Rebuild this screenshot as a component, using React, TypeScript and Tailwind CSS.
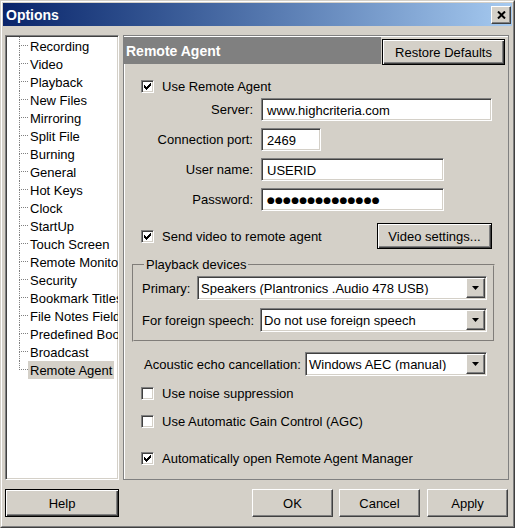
import React from 'react'

const raised =
  'bg-[#d4d0c8] border border-t-white border-l-white border-r-[#404040] border-b-[#404040] shadow-[inset_-1px_-1px_0_#808080]'
const raisedDefault =
  'bg-[#d4d0c8] border border-black shadow-[inset_1px_1px_0_#ffffff,inset_-1px_-1px_0_#404040,inset_-2px_-2px_0_#808080]'
const sunken =
  'border border-t-[#808080] border-l-[#808080] border-r-white border-b-white shadow-[inset_1px_1px_0_#404040,inset_-1px_-1px_0_#d4d0c8]'

const treeItems = [
  'Recording',
  'Video',
  'Playback',
  'New Files',
  'Mirroring',
  'Split File',
  'Burning',
  'General',
  'Hot Keys',
  'Clock',
  'StartUp',
  'Touch Screen',
  'Remote Monitoring',
  'Security',
  'Bookmark Titles',
  'File Notes Fields',
  'Predefined Bookmarks',
  'Broadcast',
  'Remote Agent',
]

function Checkbox({ checked, label }: { checked: boolean; label: string }) {
  return (
    <div className="flex h-[16px] items-center">
      <div className={`ml-[9px] flex h-[13px] w-[13px] items-center justify-center bg-white ${sunken}`}>
        {checked && (
          <svg width="7" height="7" viewBox="0 0 7 7">
            <path d="M0 2h1v1h1v1h1V3h1V2h1V1h1V0h1v3H6v1H5v1H4v1H3v1H2V6H1V5H0z" fill="#000" />
          </svg>
        )}
      </div>
      <span className="ml-[8px] whitespace-nowrap">{label}</span>
    </div>
  )
}

function Field({ label, value, width }: { label: string; value: React.ReactNode; width: string }) {
  return (
    <div className="flex h-[23px] items-center">
      <span className="w-[121px] text-right">{label}</span>
      <div className={`ml-[8px] flex h-[23px] items-center bg-white pl-[5px] pt-[1px] ${width} ${sunken}`}>{value}</div>
    </div>
  )
}

function Dropdown({ value, width }: { value: string; width: string }) {
  return (
    <div className={`flex h-[24px] items-center bg-white ${width} ${sunken}`}>
      <span className="flex-1 truncate pl-[3px] pt-[1px]">{value}</span>
      <div className={`mr-[1px] flex h-[20px] w-[19px] items-center justify-center ${raised}`}>
        <svg width="7" height="4" viewBox="0 0 7 4">
          <path d="M0 0h7L3.5 4z" fill="#000" />
        </svg>
      </div>
    </div>
  )
}

export default function App() {
  return (
    <div className="h-[528px] w-[515px] border border-t-[#d4d0c8] border-l-[#d4d0c8] border-r-[#404040] border-b-[#404040] bg-[#d4d0c8] font-['Liberation_Sans',Arial,sans-serif] text-[13px] leading-none text-black">
      <div className="flex h-full flex-col border border-t-white border-l-white border-r-[#808080] border-b-[#808080] p-[1px]">
        <div className="flex h-[23px] items-center justify-between bg-linear-to-r from-[#0a246a] to-[#a6caf0] pl-[3px]">
          <span className="text-[14px] font-bold text-white">Options</span>
          <div className={`mr-[1px] flex h-[18px] w-[20px] items-center justify-center ${raised}`}>
            <svg width="9" height="8" viewBox="0 0 9 8">
              <path d="M1 0.5l7 7M8 0.5l-7 7" stroke="#000" strokeWidth="2" />
            </svg>
          </div>
        </div>

        <div className="flex flex-col pl-[2px] pt-[9px]">
          <div className="flex gap-[4px]">
            <div className={`h-[445px] w-[114px] overflow-hidden bg-white ${sunken}`}>
              <div className="pt-[1px]">
                {treeItems.map((item, i) => {
                  const last = i === treeItems.length - 1
                  const selected = item === 'Remote Agent'
                  return (
                    <div key={item} className="flex h-[18px] items-stretch">
                      <div className="w-[13px] shrink-0" />
                      <div className="flex w-[9px] shrink-0 flex-col">
                        <div className="h-[9px] border-b border-l border-dotted border-[#808080]" />
                        {!last && <div className="flex-1 border-l border-dotted border-[#808080]" />}
                      </div>
                      <div
                        className={`flex items-center whitespace-nowrap px-[2px] pt-[1px] ${selected ? 'bg-[#d4d0c8]' : ''}`}
                      >
                        {item}
                      </div>
                    </div>
                  )
                })}
              </div>
            </div>

            <div className="h-[445px] w-[386px] border border-[#808080] shadow-[inset_1px_1px_0_#ffffff]">
              <div className="flex h-[28px] pt-[1px]">
                <div className="flex flex-1 items-center bg-[#808080] pl-[2px] pt-[1px] text-[14px] font-bold text-white">
                  Remote Agent
                </div>
                <div className={`ml-[1px] mr-[3px] mt-[2px] flex h-[26px] w-[123px] items-center justify-center ${raisedDefault}`}>
                  Restore Defaults
                </div>
              </div>

              <div className="flex flex-col pl-[8px]">
                <div className="mt-[14px]">
                  <Checkbox checked label="Use Remote Agent" />
                </div>
                <div className="mt-[4px]">
                  <Field label="Server:" value="www.highcriteria.com" width="w-[231px]" />
                </div>
                <div className="mt-[7px]">
                  <Field label="Connection port:" value="2469" width="w-[60px]" />
                </div>
                <div className="mt-[7px]">
                  <Field label="User name:" value="USERID" width="w-[183px]" />
                </div>
                <div className="mt-[7px]">
                  <Field
                    label="Password:"
                    value={
                      <span className="font-['DejaVu_Sans',sans-serif] text-[9px] tracking-[0.2px]">
                        ●●●●●●●●●●●●●●
                      </span>
                    }
                    width="w-[183px]"
                  />
                </div>

                <div className="mt-[12px] flex h-[26px] items-center">
                  <div className="w-[245px]">
                    <Checkbox checked label="Send video to remote agent" />
                  </div>
                  <div className={`flex h-[26px] w-[115px] items-center justify-center ${raisedDefault}`}>
                    Video settings...
                  </div>
                </div>

                <fieldset className="mt-[8px] w-[363px] border-2 border-[#d4d0c8] pb-[8px] pl-[8px] pr-[6px] [border-style:groove]">
                  <legend className="ml-[2px] px-[2px] leading-[15px]">Playback devices</legend>
                  <div className="mt-[4px] flex items-center justify-between">
                    <span>Primary:</span>
                    <Dropdown value="Speakers (Plantronics .Audio 478 USB)" width="w-[290px]" />
                  </div>
                  <div className="mt-[8px] flex items-center justify-between">
                    <span>For foreign speech:</span>
                    <Dropdown value="Do not use foreign speech" width="w-[227px]" />
                  </div>
                </fieldset>

                <div className="mt-[10px] flex items-center">
                  <span className="w-[173px] pl-[12px]">Acoustic echo cancellation:</span>
                  <Dropdown value="Windows AEC (manual)" width="w-[182px]" />
                </div>

                <div className="mt-[9px]">
                  <Checkbox checked={false} label="Use noise suppression" />
                </div>
                <div className="mt-[12px]">
                  <Checkbox checked={false} label="Use Automatic Gain Control (AGC)" />
                </div>
                <div className="mt-[21px]">
                  <Checkbox checked label="Automatically open Remote Agent Manager" />
                </div>
              </div>
            </div>
          </div>

          <div className="mt-[9px] flex h-[28px]">
            <div className={`flex w-[114px] items-center justify-center ${raisedDefault}`}>Help</div>
            <div className="flex-1" />
            <div className={`flex w-[81px] items-center justify-center ${raised}`}>OK</div>
            <div className={`ml-[6px] flex w-[81px] items-center justify-center ${raised}`}>Cancel</div>
            <div className={`ml-[7px] mr-[4px] flex w-[81px] items-center justify-center ${raised}`}>Apply</div>
          </div>
        </div>
      </div>
    </div>
  )
}
